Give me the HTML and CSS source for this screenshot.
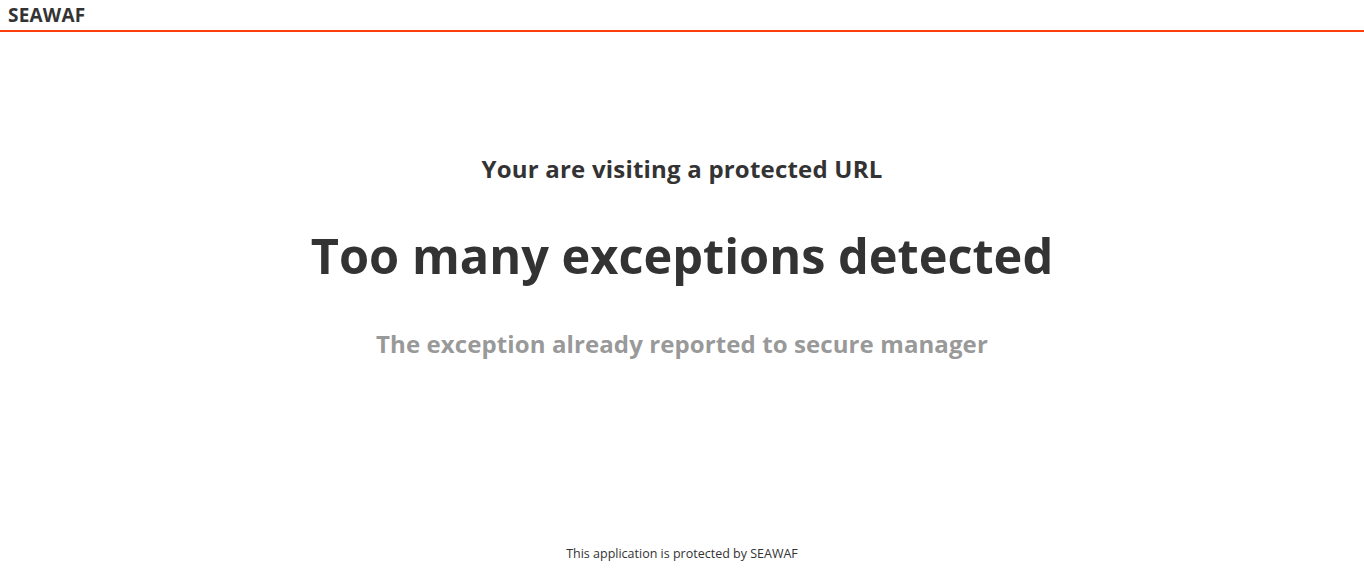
FILE: index.html
```html
<!DOCTYPE html>
<html>
<head>
<meta charset="utf-8">
<link rel="stylesheet" href="styles.css">
</head>
<body>
<div class="page">
  <header class="topbar"><span class="brand">SEAWAF</span></header>
  <main class="content">
    <h3 class="sub">Your are visiting a protected URL</h3>
    <h1 class="title">Too many exceptions detected</h1>
    <h3 class="note">The exception already reported to secure manager</h3>
  </main>
  <footer class="foot">This application is protected by SEAWAF</footer>
</div>
</body>
</html>
```
FILE: styles.css
```css
html, body { margin: 0; padding: 0; background: #fff; }
body { font-family: "Open Sans", "Noto Sans", sans-serif; color: #333; }
.page { height: 572px; display: flex; flex-direction: column; }
.topbar { height: 30px; border-bottom: 2px solid #fb3f0a; padding-left: 8px; display: flex; align-items: center; }
.brand { font-weight: 700; font-size: 19px; letter-spacing: 0.2px; color: #333; }
.content { flex: 1; display: flex; flex-direction: column; align-items: center; padding-top: 121px; }
.sub { margin: 0; font-size: 24px; font-weight: 700; line-height: 32px; letter-spacing: 0.2px; }
.title { margin: 35px 0 0; font-size: 48.7px; font-weight: 700; line-height: 70px; }
.note { margin: 38px 0 0; font-size: 24px; font-weight: 700; color: #999; line-height: 32px; letter-spacing: 0.1px; }
.foot { text-align: center; font-size: 12.5px; padding-bottom: 10px; color: #333; }
```
